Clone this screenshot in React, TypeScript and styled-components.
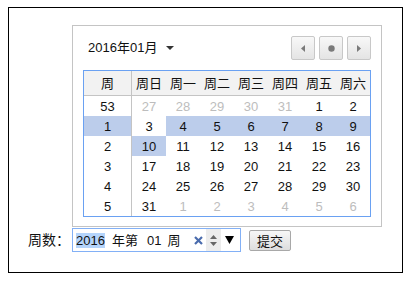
import React from "react";
import styled, {createGlobalStyle} from "styled-components";

const GlobalStyle = createGlobalStyle`
    body {
        margin: 0;
        background: #fff;
        color: #000;
        font-family: "Liberation Sans", Arial, "Noto Sans CJK SC", sans-serif;
    }
`

const Frame = styled.div`
    box-sizing: border-box;
    width: 395px;
    height: 266px;
    margin: 7px 0 0 8px;
    border: 1px solid #000;
    padding-top: 17px;
`
const Picker = styled.div`
    box-sizing: border-box;
    width: 310px;
    margin-left: 63px;
    border: 1px solid #c4c4c4;
    padding: 10px 10px 9px 10px;
    background: #fff;
`
const PickerHead = styled.div`
    display: flex;
    align-items: center;
    justify-content: space-between;
    height: 24px;
    margin-bottom: 10px;
`
const Title = styled.div`
    display: flex;
    align-items: center;
    padding-left: 5px;
    font-size: 13px;
    line-height: 16px;
    color: #111;
`
const Caret = styled.span`
    width: 0;
    height: 0;
    margin-left: 9px;
    border-left: 4px solid transparent;
    border-right: 4px solid transparent;
    border-top: 4px solid #333;
`
const Nav = styled.div`
    display: flex;
    gap: 4px;
`
const NavButton = styled.div`
    box-sizing: border-box;
    width: 24px;
    height: 24px;
    display: flex;
    align-items: center;
    justify-content: center;
    border: 1px solid #c8c8c8;
    border-radius: 2px;
    background: linear-gradient(#f8f8f8, #e4e4e4);
`
const Table = styled.div`
    box-sizing: border-box;
    width: 288px;
    border: 1px solid #6aa1f2;
    display: grid;
    grid-template-columns: 48px repeat(7, 34px);
    grid-template-rows: 25px repeat(6, 20px);
`
const Cell = styled.div<{ $week?: boolean; $head?: boolean; $muted?: boolean; $sel?: boolean }>`
    box-sizing: border-box;
    display: flex;
    align-items: center;
    justify-content: center;
    font-size: 13px;
    line-height: 15px;
    color: ${p => p.$muted ? "#bdbdbd" : "#111"};
    background: ${p => p.$head ? "#f2f2f2" : p.$sel ? "#bccdeb" : "transparent"};
    border-right: ${p => p.$week ? "1px solid #c4c4c4" : "none"};
    border-bottom: ${p => p.$head ? "1px solid #c4c4c4" : "none"};
`
const FormRow = styled.div`
    display: flex;
    align-items: center;
    height: 24px;
    margin-top: 1px;
    padding-left: 19px;
`
const Label = styled.span`
    width: 44px;
    font-size: 14px;
    line-height: 16px;
    white-space: nowrap;
    color: #111;
`
const WeekInput = styled.div`
    box-sizing: border-box;
    width: 169px;
    height: 24px;
    display: flex;
    align-items: center;
    border: 1px solid #82b0f6;
    padding: 0 6px 0 3px;
    font-size: 13px;
    line-height: 15px;
    color: #111;
`
const Field = styled.span<{ $sel?: boolean; $gap: number }>`
    margin-left: ${p => p.$gap}px;
    background: ${p => p.$sel ? "#b4d4fb" : "transparent"};
    white-space: nowrap;
`
const Clear = styled.span`
    margin-left: auto;
    display: flex;
`
const Spinner = styled.span`
    width: 15px;
    align-self: stretch;
    margin-left: 3px;
    display: flex;
    flex-direction: column;
    align-items: center;
    justify-content: center;
    gap: 3px;
    background: #ececec;
`
const Drop = styled.span`
    margin-left: 4px;
    display: flex;
`
const Submit = styled.div`
    box-sizing: border-box;
    width: 42px;
    height: 21px;
    margin-left: 8px;
    display: flex;
    align-items: center;
    justify-content: center;
    border: 1px solid #a8a8a8;
    border-radius: 2px;
    background: linear-gradient(#f7f7f7, #dddddd);
    font-size: 13px;
    color: #111;
`

const heads = ["周日", "周一", "周二", "周三", "周四", "周五", "周六"];

const weeks = [
    {no: 53, days: [27, 28, 29, 30, 31, 1, 2], muted: [0, 1, 2, 3, 4]},
    {no: 1, days: [3, 4, 5, 6, 7, 8, 9], muted: []},
    {no: 2, days: [10, 11, 12, 13, 14, 15, 16], muted: []},
    {no: 3, days: [17, 18, 19, 20, 21, 22, 23], muted: []},
    {no: 4, days: [24, 25, 26, 27, 28, 29, 30], muted: []},
    {no: 5, days: [31, 1, 2, 3, 4, 5, 6], muted: [1, 2, 3, 4, 5, 6]},
];

// selected range: week 1 row (after the sunday) and sunday the 10th
const isSelected = (row: number, col: number) =>
    (row === 1 && col > 0) || (row === 2 && col === 0);

export default function App() {
    return (
        <>
            <GlobalStyle/>
            <Frame>
                <Picker>
                    <PickerHead>
                        <Title>2016年01月<Caret/></Title>
                        <Nav>
                            <NavButton>
                                <svg width="4" height="7" viewBox="0 0 4 7"><path d="M4 0 L0 3.5 L4 7 Z" fill="#7a7a7a"/></svg>
                            </NavButton>
                            <NavButton>
                                <svg width="7" height="7" viewBox="0 0 7 7"><circle cx="3.5" cy="3.5" r="3.2" fill="#7a7a7a"/></svg>
                            </NavButton>
                            <NavButton>
                                <svg width="4" height="7" viewBox="0 0 4 7"><path d="M0 0 L4 3.5 L0 7 Z" fill="#7a7a7a"/></svg>
                            </NavButton>
                        </Nav>
                    </PickerHead>
                    <Table>
                        <Cell $head $week>周</Cell>
                        {heads.map(h => <Cell key={h} $head>{h}</Cell>)}
                        {weeks.map((w, r) => (
                            <React.Fragment key={r}>
                                <Cell $week $sel={r === 1}>{w.no}</Cell>
                                {w.days.map((d, c) => (
                                    <Cell key={c} $muted={w.muted.includes(c)} $sel={isSelected(r, c)}>{d}</Cell>
                                ))}
                            </React.Fragment>
                        ))}
                    </Table>
                </Picker>
                <FormRow>
                    <Label>周数：</Label>
                    <WeekInput>
                        <Field $sel $gap={0}>2016</Field>
                        <Field $gap={7}>年第</Field>
                        <Field $gap={9}>01</Field>
                        <Field $gap={6}>周</Field>
                        <Clear>
                            <svg width="9" height="9" viewBox="0 0 9 9">
                                <path d="M1 1 L8 8 M8 1 L1 8" stroke="#4a6cad" strokeWidth="2.2"/>
                            </svg>
                        </Clear>
                        <Spinner>
                            <svg width="7" height="4" viewBox="0 0 7 4"><path d="M0 4 L3.5 0 L7 4 Z" fill="#666"/></svg>
                            <svg width="7" height="4" viewBox="0 0 7 4"><path d="M0 0 L3.5 4 L7 0 Z" fill="#666"/></svg>
                        </Spinner>
                        <Drop>
                            <svg width="9" height="8" viewBox="0 0 9 8"><path d="M0 0 L9 0 L4.5 8 Z" fill="#000"/></svg>
                        </Drop>
                    </WeekInput>
                    <Submit>提交</Submit>
                </FormRow>
            </Frame>
        </>
    );
}
